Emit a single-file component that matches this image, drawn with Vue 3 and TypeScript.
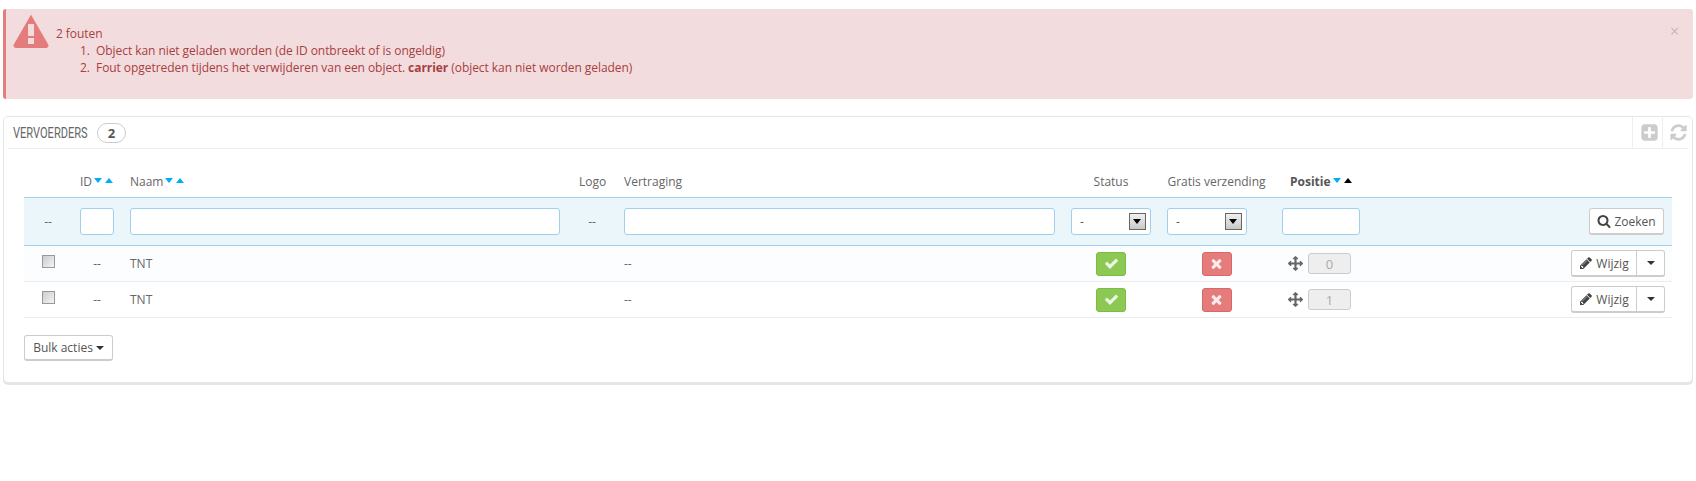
<script setup lang="ts">
interface Carrier { id: string; name: string; delay: string; position: number }
const carriers: Carrier[] = [
  { id: '--', name: 'TNT', delay: '--', position: 0 },
  { id: '--', name: 'TNT', delay: '--', position: 1 },
]
const icons = {
  check: 'M1671 566q0 40-28 68l-724 724-136 136q-28 28-68 28t-68-28l-136-136-362-362q-28-28-28-68t28-68l136-136q28-28 68-28t68 28l294 295 656-657q28-28 68-28t68 28l136 136q28 28 28 68z',
  times: 'M1490 1322q0 40-28 68l-136 136q-28 28-68 28t-68-28l-294-294-294 294q-28 28-68 28t-68-28l-136-136q-28-28-28-68t28-68l294-294-294-294q-28-28-28-68t28-68l136-136q28-28 68-28t68 28l294 294 294-294q28-28 68-28t68 28l136 136q28 28 28 68t-28 68l-294 294 294 294q28 28 28 68z',
  search: 'M1216 832q0-185-131.500-316.500t-316.500-131.500-316.500 131.500-131.500 316.500 131.500 316.500 316.500 131.500 316.500-131.500 131.500-316.500zm512 832q0 52-38 90t-90 38q-54 0-90-38l-343-342q-179 124-399 124-143 0-273.500-55.500t-225-150-150-225-55.500-273.500 55.500-273.500 150-225 225-150 273.500-55.500 273.500 55.500 225 150 150 225 55.500 273.500q0 220-124 399l343 343q37 37 37 90z',
  pencil: 'M491 1536l91-91-235-235-91 91v107h128v128h107zm523-928q0-22-22-22-10 0-17 7l-542 542q-7 7-7 17 0 22 22 22 10 0 17-7l542-542q7-7 7-17zm-54-192l416 416-832 832h-416v-416zm683 96q0 53-37 90l-166 166-416-416 166-165q36-38 90-38 53 0 91 38l235 234q37 39 37 91z',
  arrows: 'M1792 896q0 26-19 45l-256 256q-19 19-45 19t-45-19-19-45v-128h-384v384h128q26 0 45 19t19 45-19 45l-256 256q-19 19-45 19t-45-19l-256-256q-19-19-19-45t19-45 45-19h128v-384h-384v128q0 26-19 45t-45 19-45-19l-256-256q-19-19-19-45t19-45l256-256q19-19 45-19t45 19 19 45v128h384v-384h-128q-26 0-45-19t-19-45 19-45l256-256q19-19 45-19t45 19l256 256q19 19 19 45t-19 45-45 19h-128v384h384v-128q0-26 19-45t45-19 45 19l256 256q19 19 19 45z',
  refresh: 'M1639 1056q0 5-1 7-64 268-268 434.500t-478 166.500q-146 0-282.500-55t-243.500-157l-129 129q-19 19-45 19t-45-19-19-45v-448q0-26 19-45t45-19h448q26 0 45 19t19 45-19 45l-137 137q71 66 161 102t187 36q134 0 250-65t186-179q11-17 53-117 8-23 30-23h192q13 0 22.500 9.500t9.500 22.500zm25-800v448q0 26-19 45t-45 19h-448q-26 0-45-19t-19-45 19-45l138-138q-148-137-349-137-134 0-250 65t-186 179q-11 17-53 117-8 23-30 23h-199q-13 0-22.500-9.500t-9.500-22.500v-7q65-268 270-434.500t480-166.500q146 0 284 55.500t245 156.500l130-129q19-19 45-19t45 19 19 45z',
  plus: 'M1408 960v-128q0-26-19-45t-45-19h-320v-320q0-26-19-45t-45-19h-128q-26 0-45 19t-19 45v320h-320q-26 0-45 19t-19 45v128q0 26 19 45t45 19h320v320q0 26 19 45t45 19h128q26 0 45-19t19-45v-320h320q26 0 45-19t19-45zm256-544v960q0 119-84.500 203.500t-203.500 84.500h-960q-119 0-203.500-84.500t-84.500-203.500v-960q0-119 84.500-203.500t203.500-84.500h960q119 0 203.500 84.500t84.500 203.500z',
}
</script>

<template>
  <div class="page">
    <div class="alert">
      <svg class="warn" viewBox="0 0 36 34" width="36" height="34">
        <path d="M18 1.500 L35 31 Q35.500 33.500 33 33.500 L3 33.500 Q.5 33.500 1 31 Z" fill="#e57c7c" stroke="#e57c7c" stroke-linejoin="round" />
        <rect x="15" y="10" width="6" height="12" fill="#f3dcdd" />
        <rect x="15" y="24" width="6" height="6" fill="#f3dcdd" />
      </svg>
      <span class="close">×</span>
      <div>2 fouten</div>
      <ol>
        <li>Object kan niet geladen worden (de ID ontbreekt of is ongeldig)</li>
        <li>Fout opgetreden tijdens het verwijderen van een object. <b>carrier</b> (object kan niet worden geladen)</li>
      </ol>
    </div>

    <section class="panel">
      <header class="panel-head">
        <span class="title-box"><span class="title">VERVOERDERS</span></span>
        <span class="badge">2</span>
        <span class="tools">
          <span class="tool"><svg viewBox="0 0 1792 1792" width="19" height="19"><path :d="icons.plus" /></svg></span>
          <span class="tool"><svg viewBox="0 0 1792 1792" width="19" height="19"><path :d="icons.refresh" /></svg></span>
        </span>
      </header>

      <table class="grid">
        <colgroup>
          <col style="width:48px" /><col style="width:50px" /><col style="width:446px" /><col style="width:48px" />
          <col style="width:447px" /><col style="width:96px" /><col style="width:115px" /><col style="width:94px" /><col />
        </colgroup>
        <thead>
          <tr class="heads">
            <th></th>
            <th><span class="sortable">ID<i class="down"></i><i class="up"></i></span></th>
            <th><span class="sortable">Naam<i class="down"></i><i class="up"></i></span></th>
            <th class="logo-head">Logo</th>
            <th>Vertraging</th>
            <th class="center">Status</th>
            <th class="center">Gratis verzending</th>
            <th class="pos-head"><span class="sortable"><b>Positie</b><i class="down"></i><i class="up active"></i></span></th>
            <th></th>
          </tr>
          <tr class="filters">
            <td class="center">--</td>
            <td><input class="field" type="text" /></td>
            <td><input class="field" type="text" /></td>
            <td class="center">--</td>
            <td><input class="field" type="text" /></td>
            <td>
              <span class="pick"><select class="field"><option>-</option></select><i class="pick-arrow"></i></span>
            </td>
            <td>
              <span class="pick"><select class="field"><option>-</option></select><i class="pick-arrow"></i></span>
            </td>
            <td><input class="field" type="text" /></td>
            <td class="right">
              <button class="btn search" type="button">
                <svg viewBox="0 0 1792 1792" width="14" height="14"><path :d="icons.search" /></svg>Zoeken
              </button>
            </td>
          </tr>
        </thead>
        <tbody>
          <tr v-for="(c, i) in carriers" :key="i" :class="{ odd: i === 0 }">
            <td class="center"><input class="tick" type="checkbox" /></td>
            <td class="center">{{ c.id }}</td>
            <td>{{ c.name }}</td>
            <td></td>
            <td>{{ c.delay }}</td>
            <td class="center">
              <span class="state ok"><svg viewBox="0 0 1792 1792" width="15" height="15"><path :d="icons.check" /></svg></span>
            </td>
            <td class="center">
              <span class="state no"><svg viewBox="0 0 1792 1792" width="15" height="15"><path :d="icons.times" /></svg></span>
            </td>
            <td>
              <span class="pos">
                <svg viewBox="0 0 1792 1792" width="15" height="15"><path :d="icons.arrows" /></svg>
                <input class="num" type="text" disabled :value="c.position" />
              </span>
            </td>
            <td class="right">
              <span class="split">
                <button class="btn edit" type="button">
                  <svg viewBox="0 0 1792 1792" width="14" height="14"><path :d="icons.pencil" /></svg>Wijzig
                </button>
                <button class="btn more" type="button"><i class="caret"></i></button>
              </span>
            </td>
          </tr>
        </tbody>
      </table>

      <button class="btn bulk" type="button">Bulk acties <i class="caret wide"></i></button>
    </section>
  </div>
</template>

<style>
html, body { background: #fff; }
</style>

<style scoped>
.page {
  padding: 9px 3px 0;
  font-family: "Open Sans", sans-serif;
  font-size: 12px;
  line-height: 17px;
  color: #666;
  height: 472px;
  overflow: hidden;
}

.alert {
  position: relative;
  box-sizing: border-box;
  height: 90px;
  padding: 16px 0 0 50px;
  background: #f3dcde;
  border-left: 3px solid #e57c7c;
  border-radius: 3px;
  color: #a8403f;
  letter-spacing: -.06px;
}
.alert ol { margin: 0; padding-left: 40px; }
.alert li::marker { content: counter(list-item) ".  "; }
.alert b { font-weight: 700; }
.warn { position: absolute; left: 7px; top: 5px; }
.close {
  position: absolute;
  right: 14px;
  top: 14px;
  font-size: 16px;
  color: #c9b6b7;
}

.panel {
  box-sizing: border-box;
  height: 267px;
  margin-top: 17px;
  padding: 0 20px;
  background: #fff;
  border: 1px solid #e6e6e6;
  border-radius: 5px;
  box-shadow: 0 2px 0 rgba(0, 0, 0, .1);
}
.panel-head {
  display: flex;
  align-items: center;
  box-sizing: border-box;
  height: 32px;
  margin: 0 -16px;
  padding-left: 5px;
  border-bottom: 1px solid #eee;
}
.title-box { display: block; width: 75px; padding-top: 1px; white-space: nowrap; }
.title {
  display: inline-block;
  font-family: "Roboto", sans-serif;
  font-size: 14px;
  color: #666;
  transform: scaleX(.79);
  transform-origin: left center;
}
.badge {
  box-sizing: border-box;
  width: 29px;
  height: 20px;
  margin-left: 9px;
  border: 1px solid #ccc;
  border-radius: 10px;
  text-align: center;
  font-size: 13px;
  line-height: 18px;
  font-weight: 700;
  color: #555;
}
.tools { display: flex; margin-left: auto; height: 100%; }
.tool {
  display: flex;
  align-items: center;
  box-sizing: border-box;
  width: 30px;
  border-left: 1px solid #eee;
  padding-left: 7px;
}
.tool + .tool { width: 26px; padding-left: 6px; }
.tool svg { fill: #ccc; flex: none; }

.grid {
  width: 100%;
  margin-top: 16px;
  table-layout: fixed;
  border-collapse: separate;
  border-spacing: 0;
}
.grid th {
  height: 32px;
  padding: 0 8px;
  box-sizing: border-box;
  text-align: left;
  font-weight: 400;
  white-space: nowrap;
}
.grid th b { font-weight: 700; color: #555; }
.grid td { padding: 0 8px; box-sizing: border-box; }
.grid .center { text-align: center; }
.grid .right { text-align: right; }
.grid .logo-head { padding-left: 11px; }
.grid .pos-head { padding-left: 16px; overflow: visible; }

.sortable { display: inline-flex; align-items: center; }
.sortable i {
  width: 0;
  height: 0;
  margin-top: -1px;
  border-left: 4.500px solid transparent;
  border-right: 4.500px solid transparent;
}
.sortable .down { border-top: 5px solid #00aff0; margin-left: 2px; }
.sortable .up { border-bottom: 5px solid #00aff0; margin-left: 3px; }
.sortable .up.active { border-bottom-color: #000; }

.filters td {
  height: 49px;
  background: #ebf6fb;
  border-top: 1px solid #a0d0eb;
  border-bottom: 1px solid #a0d0eb;
}
.field {
  display: block;
  box-sizing: border-box;
  width: 100%;
  height: 27px;
  padding: 0 8px;
  background: #fff;
  border: 1px solid #a0d0eb;
  border-radius: 3px;
  font: inherit;
  color: #555;
  outline: none;
}
.pick {
  position: relative;
  display: block;
  width: 80px;
}
.pick select { appearance: none; }
.pick-arrow {
  position: absolute;
  right: 5px;
  top: 5px;
  box-sizing: border-box;
  width: 17px;
  height: 17px;
  border: 1px solid #666;
  background: linear-gradient(#f0f0f0, #c8c8c8);
}
.pick-arrow::after {
  content: "";
  position: absolute;
  left: 3px;
  top: 5px;
  border-left: 4px solid transparent;
  border-right: 4px solid transparent;
  border-top: 5px solid #000;
}

tbody td {
  height: 36px;
  border-bottom: 1px solid #eaedef;
}
tbody tr.odd td { background: #fcfdfe; }

.tick {
  appearance: none;
  display: block;
  width: 13px;
  height: 13px;
  margin: -5px auto 0;
  border: 1px solid #999;
  background: linear-gradient(135deg, #ccc, #f4f4f4);
}

.state {
  display: inline-flex;
  align-items: center;
  justify-content: center;
  vertical-align: middle;
  box-sizing: border-box;
  width: 30px;
  height: 24px;
  border-radius: 3px;
}
.state svg { fill: #fff; opacity: .85; }
.state.ok { background: #8bc954; border: 1px solid #7cbc45; }
.state.no { background: #e57c7c; border: 1px solid #dc6666; }

.pos { display: flex; align-items: center; margin-left: 6px; gap: 5px; }
.pos svg { fill: #666; flex: none; }
.num {
  box-sizing: border-box;
  width: 43px;
  height: 21px;
  padding: 0;
  text-align: center;
  background: #eee;
  border: 1px solid #ccc;
  border-radius: 3px;
  font: inherit;
  font-size: 13px;
  color: #aaa;
}

.btn {
  display: inline-flex;
  align-items: center;
  justify-content: center;
  box-sizing: border-box;
  background: #fff;
  border: 1px solid #ccc;
  border-bottom-width: 2px;
  border-radius: 3px;
  font: inherit;
  color: #555;
  padding: 0;
}
.btn svg { fill: #444; }
.search { width: 75px; height: 27px; gap: 3px; }
.split { display: inline-flex; margin-right: -1px; vertical-align: middle; }
.edit {
  width: 66px;
  height: 27px;
  gap: 3px;
  border-radius: 3px 0 0 3px;
  color: #555;
}
.more {
  width: 28px;
  height: 27px;
  border-left: 0;
  border-radius: 0 3px 3px 0;
}
.caret {
  width: 0;
  height: 0;
  border-left: 4px solid transparent;
  border-right: 4px solid transparent;
  border-top: 4px solid #333;
}
.caret.wide { margin-left: 3px; }
.bulk {
  width: 89px;
  height: 26px;
  margin-top: 17px;
}
</style>
